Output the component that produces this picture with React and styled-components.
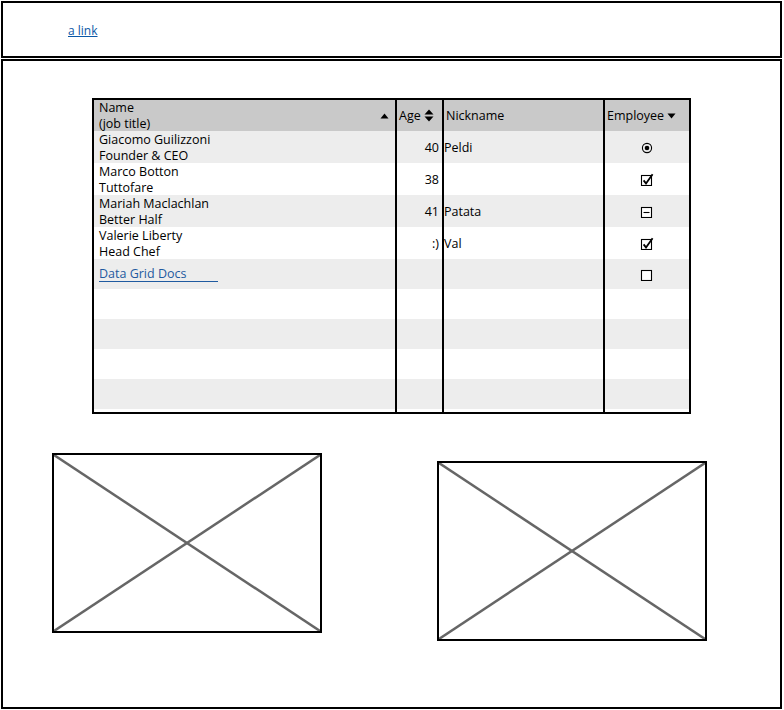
import React from "react";
import styled, { createGlobalStyle } from "styled-components";

const GlobalStyle = createGlobalStyle`
  body {
    margin: 0;
    background: #fff;
    font-family: "Open Sans", "Liberation Sans", sans-serif;
    color: #000;
  }
`;

const rows = [
  { name: "Giacomo Guilizzoni", title: "Founder & CEO", age: "40", nick: "Peldi", mark: "radio" },
  { name: "Marco Botton", title: "Tuttofare", age: "38", nick: "", mark: "check" },
  { name: "Mariah Maclachlan", title: "Better Half", age: "41", nick: "Patata", mark: "minus" },
  { name: "Valerie Liberty", title: "Head Chef", age: ":)", nick: "Val", mark: "check" },
];

const Mark = ({ kind }) => {
  if (kind === "radio") {
    return (
      <svg width="12" height="12" viewBox="0 0 12 12">
        <circle cx="6" cy="6" r="4.6" fill="none" stroke="#000" strokeWidth="1.1" />
        <circle cx="6" cy="6" r="2.3" fill="#000" />
      </svg>
    );
  }
  return (
    <svg width="14" height="13" viewBox="0 0 14 13">
      <rect x="1.5" y="2.5" width="10" height="10" fill="#fff" stroke="#000" strokeWidth="1.1" />
      {kind === "check" && (
        <path d="M3.6 7.4 L6 10.4 L12.6 1.2" fill="none" stroke="#000" strokeWidth="1.8" />
      )}
      {kind === "minus" && <path d="M3.5 7.5 H9.5" stroke="#000" strokeWidth="1.1" />}
    </svg>
  );
};

const Triangle = ({ dir }) => (
  <svg width="9" height="6" viewBox="0 0 9 6">
    {dir === "up" ? <path d="M0.5 5.5 L4.5 0.5 L8.5 5.5 Z" fill="#000" /> : <path d="M0.5 0.5 L4.5 5.5 L8.5 0.5 Z" fill="#000" />}
  </svg>
);

const Both = () => (
  <svg width="10" height="13" viewBox="0 0 10 13">
    <path d="M0.5 5.5 L5 0.5 L9.5 5.5 Z" fill="#000" />
    <path d="M0.5 7.5 L5 12.5 L9.5 7.5 Z" fill="#000" />
  </svg>
);

const Placeholder = ({ offset }) => (
  <ImageBox $offset={offset}>
    <svg width="100%" height="100%" preserveAspectRatio="none" viewBox="0 0 100 100">
      <line x1="0" y1="0" x2="100" y2="100" stroke="#666" strokeWidth="2.5" vectorEffect="non-scaling-stroke" />
      <line x1="100" y1="0" x2="0" y2="100" stroke="#666" strokeWidth="2.5" vectorEffect="non-scaling-stroke" />
    </svg>
  </ImageBox>
);

const EmptyCells = () => (
  <>
    <Cell $col="name" />
    <Cell $col="age" />
    <Cell $col="nick" />
    <Cell $col="emp" />
  </>
);

export default function App() {
  return (
    <>
      <GlobalStyle />
      <Header>
        <TopLink href="#">a link</TopLink>
      </Header>
      <Main>
        <Grid>
          <Row $head>
            <Cell $col="name">
              <NameHead>
                <span>
                  Name
                  <br />
                  (job title)
                </span>
                <Triangle dir="up" />
              </NameHead>
            </Cell>
            <Cell $col="age">
              <HeadLabel>
                Age <Both />
              </HeadLabel>
            </Cell>
            <Cell $col="nick">
              <HeadLabel>Nickname</HeadLabel>
            </Cell>
            <Cell $col="emp">
              <HeadLabel>
                Employee <Triangle dir="down" />
              </HeadLabel>
            </Cell>
          </Row>
          {rows.map((r, i) => (
            <Row key={r.name} $shade={i % 2 === 0}>
              <Cell $col="name" $body>
                {r.name}
                <br />
                {r.title}
              </Cell>
              <Cell $col="age" $body>{r.age}</Cell>
              <Cell $col="nick" $body>{r.nick}</Cell>
              <Cell $col="emp" $body>
                <Mark kind={r.mark} />
              </Cell>
            </Row>
          ))}
          <Row $shade $short>
            <Cell $col="name">
              <DocsLink href="#">Data Grid Docs</DocsLink>
            </Cell>
            <Cell $col="age" />
            <Cell $col="nick" />
            <Cell $col="emp">
              <Mark kind="empty" />
            </Cell>
          </Row>
          {[false, true, false, true].map((s, i) => (
            <Row key={i} $shade={s} $short>
              <EmptyCells />
            </Row>
          ))}
          <Row $filler>
            <EmptyCells />
          </Row>
        </Grid>
        <Images>
          <Placeholder offset={0} />
          <Placeholder offset={8} />
        </Images>
      </Main>
    </>
  );
}

const Header = styled.header`
  box-sizing: border-box;
  margin: 1px 0 1px 1px;
  width: 781px;
  height: 57px;
  border: 2px solid #000;
  padding: 15px 0 0 65px;
`;

const TopLink = styled.a`
  font-size: 12px;
  color: #0b58a6;
  text-decoration: underline;
`;

const Main = styled.main`
  box-sizing: border-box;
  margin: 0 0 0 1px;
  width: 781px;
  height: 650px;
  border: 2px solid #000;
  padding: 37px 0 0 89px;
`;

const Grid = styled.div`
  width: 595px;
  border: 2px solid #000;
  font-size: 12.5px;
  line-height: 16px;
`;

const cols = {
  name: { w: 303, pad: "0 5px", align: "flex-start" },
  age: { w: 47, pad: "0 3px 0 0", align: "flex-end" },
  nick: { w: 161, pad: "0", align: "flex-start" },
  emp: { w: 84, pad: "0", align: "center" },
};

const Row = styled.div`
  display: flex;
  height: ${(p) => (p.$head ? 31 : p.$filler ? 3 : p.$short ? 30 : 32)}px;
  background: ${(p) => (p.$head ? "#c9c9c9" : p.$shade ? "#ededed" : "#fff")};
`;

const Cell = styled.div`
  box-sizing: border-box;
  flex: none;
  width: ${(p) => cols[p.$col].w}px;
  padding: ${(p) => cols[p.$col].pad};
  padding-top: ${(p) => (p.$body ? "1px" : "0")};
  border-right: ${(p) => (p.$col === "emp" ? "none" : "2px solid #000")};
  display: flex;
  flex-direction: column;
  justify-content: center;
  align-items: ${(p) => cols[p.$col].align};
  white-space: nowrap;
`;

const NameHead = styled.div`
  display: flex;
  width: 100%;
  align-items: center;
  justify-content: space-between;
  padding-right: 1px;
  box-sizing: border-box;
`;

const HeadLabel = styled.div`
  display: flex;
  align-items: center;
  gap: 3px;
  padding-left: 2px;
  align-self: flex-start;
`;

const DocsLink = styled.a`
  display: inline-block;
  width: 119px;
  color: #1f5aa0;
  text-decoration: none;
  border-bottom: 1px solid #1f5aa0;
  line-height: 14px;
  margin-top: 1px;
`;

const Images = styled.div`
  display: flex;
  align-items: flex-start;
  gap: 115px;
  margin: 39px 0 0 -40px;
`;

const ImageBox = styled.div`
  box-sizing: border-box;
  width: 270px;
  height: 180px;
  border: 2px solid #000;
  margin-top: ${(p) => p.$offset}px;
  svg {
    display: block;
  }
`;
